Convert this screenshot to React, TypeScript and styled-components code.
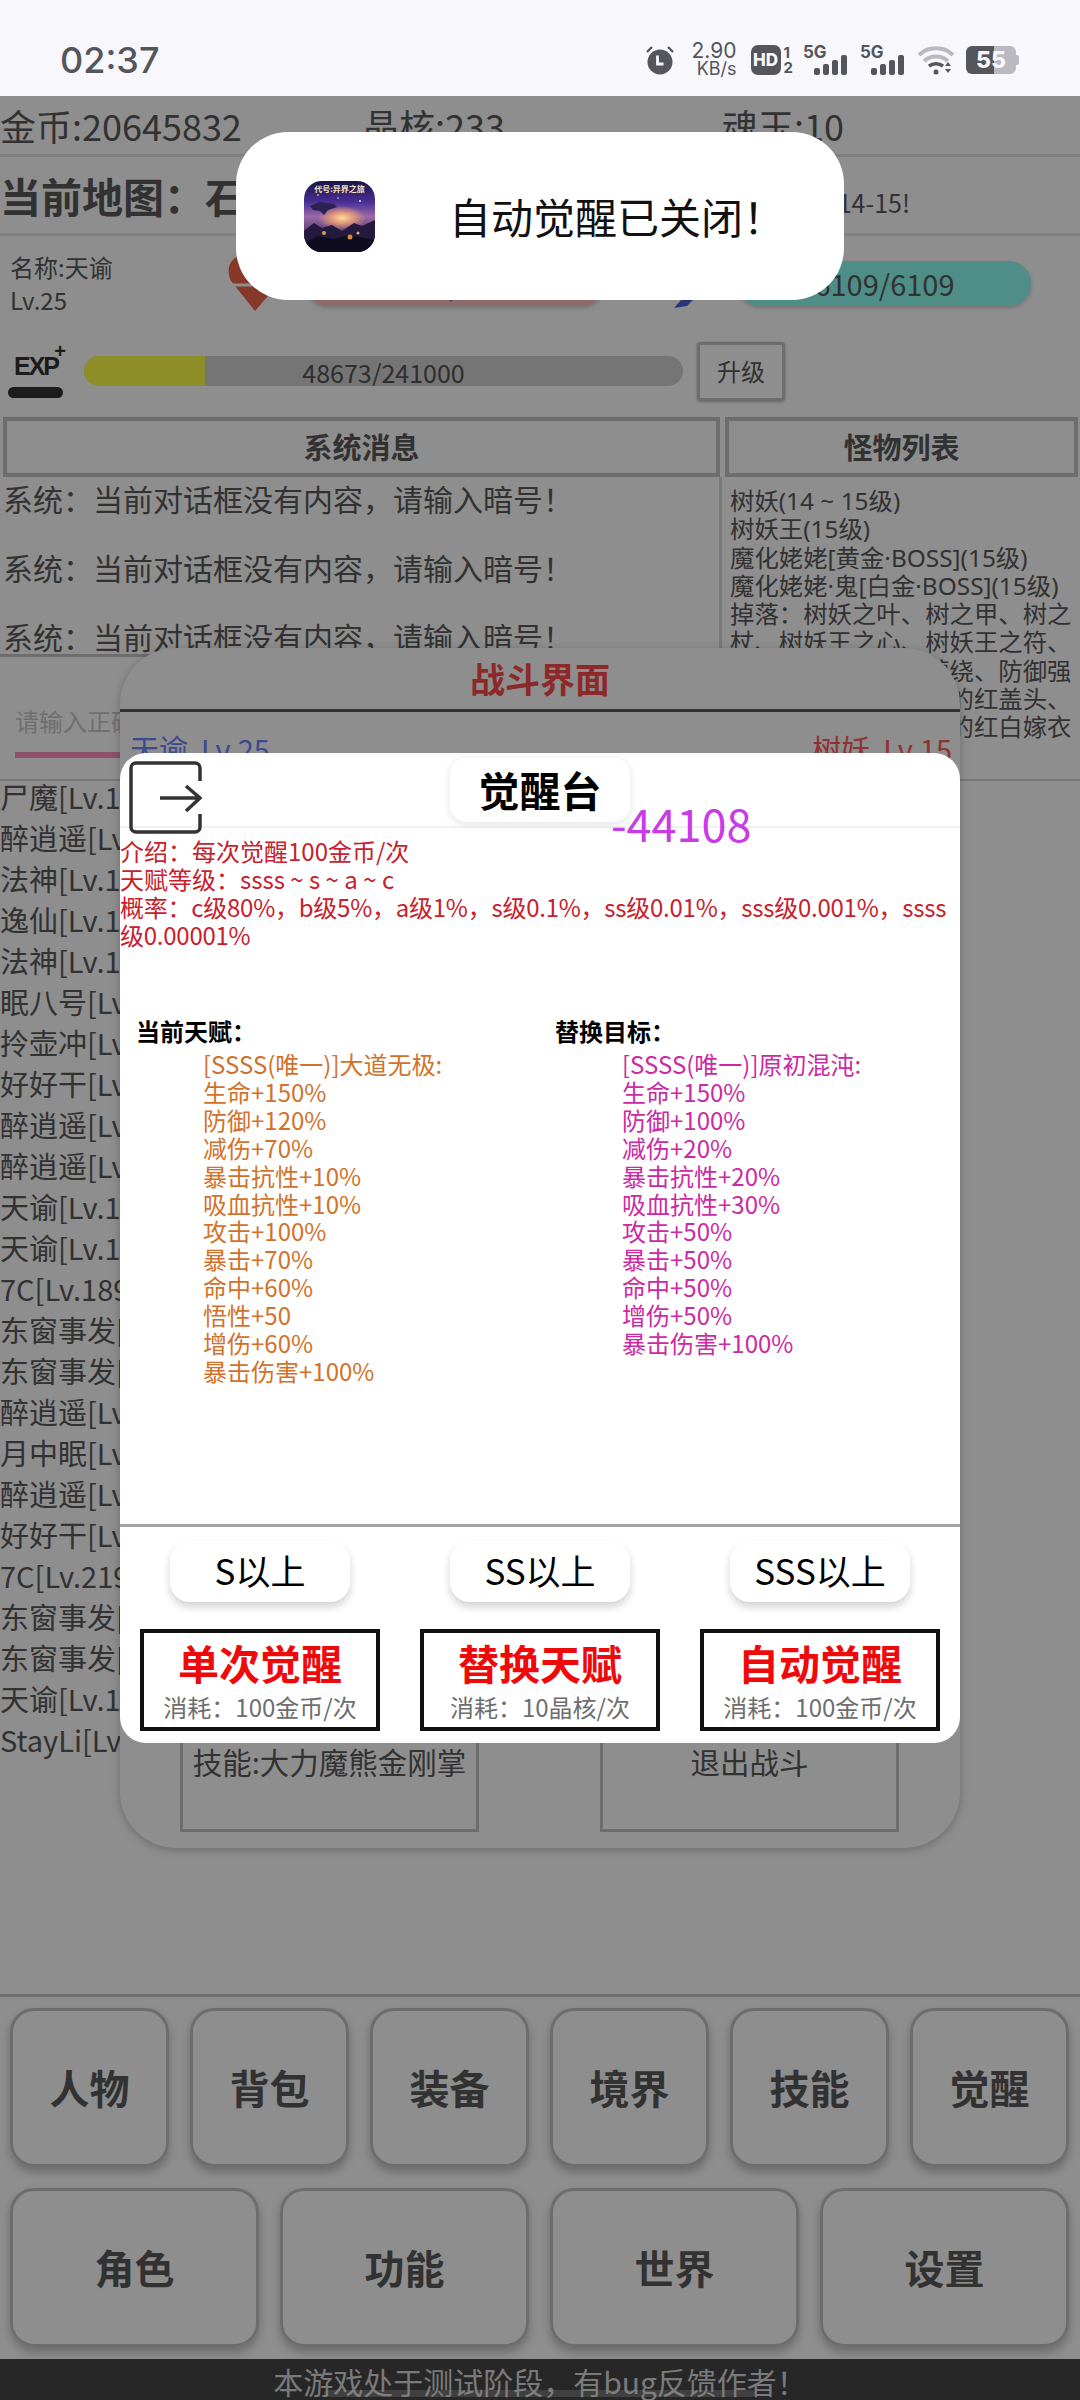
import React from "react"
import styled, { createGlobalStyle } from "styled-components"

// --- data ---
const topMenu = ["人物", "背包", "装备", "境界", "技能", "觉醒"]
const bottomMenu = ["角色", "功能", "世界", "设置"]
const players = [
  "尸魔[Lv.15]", "醉逍遥[Lv.15]", "法神[Lv.15]", "逸仙[Lv.15]", "法神[Lv.15]", "眠八号[Lv.15]",
  "拎壶冲[Lv.15]", "好好干[Lv.15]", "醉逍遥[Lv.15]", "醉逍遥[Lv.15]", "天谕[Lv.15]", "天谕[Lv.15]",
  "7C[Lv.189]", "东窗事发[Lv.15]", "东窗事发[Lv.15]", "醉逍遥[Lv.15]", "月中眠[Lv.15]", "醉逍遥[Lv.15]",
  "好好干[Lv.15]", "7C[Lv.219]", "东窗事发[Lv.15]", "东窗事发[Lv.15]", "天谕[Lv.15]", "StayLi[Lv.15]",
]
const monsters = [
  "树妖(14 ~ 15级)", "树妖王(15级)", "魔化姥姥[黄金·BOSS](15级)", "魔化姥姥·鬼[白金·BOSS](15级)",
  "掉落：树妖之叶、树之甲、树之", "杖、树妖王之心、树妖王之符、", "树妖之根、技能之缠绕、防御强",
  "化、魔化姥姥之魂魄的红盖头、", "魔化姥姥之魂魄所穿的红白嫁衣",
]
const currentTalent = [
  "[SSSS(唯一)]大道无极:", "生命+150%", "防御+120%", "减伤+70%", "暴击抗性+10%", "吸血抗性+10%",
  "攻击+100%", "暴击+70%", "命中+60%", "悟性+50", "增伤+60%", "暴击伤害+100%",
]
const targetTalent = [
  "[SSSS(唯一)]原初混沌:", "生命+150%", "防御+100%", "减伤+20%", "暴击抗性+20%", "吸血抗性+30%",
  "攻击+50%", "暴击+50%", "命中+50%", "增伤+50%", "暴击伤害+100%",
]
const actions = [
  { title: "单次觉醒", cost: "消耗：100金币/次" },
  { title: "替换天赋", cost: "消耗：10晶核/次" },
  { title: "自动觉醒", cost: "消耗：100金币/次" },
]

export default function App() {
  return (
    <Page>
      <GlobalStyle />
      <StatusBar>
        <Clock>02:37</Clock>
        <StatusIcons>
          <svg width="30" height="30" viewBox="0 0 30 30">
            <circle cx="15" cy="17" r="12.5" fill="#55555c" />
            <path d="M12.5 10.5v8.5h6" fill="none" stroke="#f7f7fc" strokeWidth="2.8" />
            <path d="M2 7l5-5M28 7l-5-5" stroke="#55555c" strokeWidth="2.4" />
          </svg>
          <Speed>
            <span>2.90</span>
            <span>KB/s</span>
          </Speed>
          <HdBadge>HD</HdBadge>
          <SimDigits>
            <span>1</span>
            <span>2</span>
          </SimDigits>
          <Signal />
          <Signal />
          <svg width="38" height="30" viewBox="0 0 38 30">
            <path d="M2 10C11 1 27 1 36 10" fill="none" stroke="#b9b9bf" strokeWidth="4" />
            <path d="M7 16c7-6 17-6 24 0" fill="none" stroke="#b9b9bf" strokeWidth="4" />
            <path d="M12 21c4-3 10-3 14 0" fill="none" stroke="#55555c" strokeWidth="3.5" />
            <circle cx="19" cy="27" r="2.5" fill="#55555c" />
            <path d="M31 17l3 4h-6zM31 28l3-4h-6z" fill="#55555c" />
          </svg>
          <Battery>
            <BatteryLabel>55</BatteryLabel>
          </Battery>
        </StatusIcons>
      </StatusBar>

      <Currency>
        <CurrencyItem $width={363}>金币:20645832</CurrencyItem>
        <CurrencyItem $width={359}>晶核:233</CurrencyItem>
        <CurrencyItem>魂玉:10</CurrencyItem>
      </Currency>

      <MapRow>
        <MapName>当前地图：石林</MapName>
        <MapLevel>推荐等级:14-15!</MapLevel>
      </MapRow>

      <PlayerRow>
        <PlayerInfo>
          <span>名称:天谕</span>
          <span>Lv.25</span>
        </PlayerInfo>
        <svg width="56" height="60" viewBox="0 0 56 60">
          <path d="M27 58L3 28C-3 16 3 3 14 3c6 0 11 3 14 8 3-5 8-8 14-8 11 0 17 13 11 25z" fill="#f0654c" />
          <path d="M2 32h52" stroke="#fff" strokeWidth="3" />
        </svg>
        <StatBar $color="#ffbcbc">1860/1860</StatBar>
        <span />
        <svg width="64" height="64" viewBox="0 0 64 64">
          <path d="M0 57L7 49 54 4l8-3-3 8-46 46z" fill="#4a63d8" />
        </svg>
        <StatBar $color="#8efff2">6109/6109</StatBar>
      </PlayerRow>

      <ExpRow>
        <ExpIcon>
          <ExpPlus>+</ExpPlus>
          <ExpLabel>EXP</ExpLabel>
          <ExpPill />
        </ExpIcon>
        <ExpBar>
          <ExpFill style={{ width: `${(48673 / 241000) * 100}%` }} />
          <ExpText>48673/241000</ExpText>
        </ExpBar>
        <LevelUp>升级</LevelUp>
      </ExpRow>

      <Panels>
        <HeaderCell>系统消息</HeaderCell>
        <HeaderCell>怪物列表</HeaderCell>
        <ChatColumn>
          <Messages>
            <Message>系统：当前对话框没有内容，请输入暗号！</Message>
            <Message>系统：当前对话框没有内容，请输入暗号！</Message>
            <Message>系统：当前对话框没有内容，请输入暗号！</Message>
          </Messages>
          <InputArea>
            <CodeInput placeholder="请输入正确的暗号" readOnly />
          </InputArea>
        </ChatColumn>
        <MonsterList>
          {monsters.map(line => (
            <div key={line}>{line}</div>
          ))}
        </MonsterList>
      </Panels>

      <PlayerList>
        {players.map((name, i) => (
          <div key={i}>{name}</div>
        ))}
      </PlayerList>

      <Menu>
        <MenuRow $count={6}>
          {topMenu.map(item => (
            <MenuButton key={item}>{item}</MenuButton>
          ))}
        </MenuRow>
        <MenuRow $count={4}>
          {bottomMenu.map(item => (
            <MenuButton key={item}>{item}</MenuButton>
          ))}
        </MenuRow>
      </Menu>

      <Footer>
        本游戏处于测试阶段，有bug反馈作者！
        <GestureBar />
      </Footer>

      <BattlePanel>
        <BattleTitle>战斗界面</BattleTitle>
        <Fighters>
          <Fighter $color="#6a86ff">天谕&nbsp;&nbsp;Lv.25</Fighter>
          <Fighter $color="#ff5a5a">树妖&nbsp;&nbsp;Lv.15</Fighter>
        </Fighters>
        <BattleActions>
          <BattleBox>技能:大力魔熊金刚掌</BattleBox>
          <BattleBox>退出战斗</BattleBox>
        </BattleActions>
      </BattlePanel>

      <Dim />

      <Modal>
        <ModalHeader>
          <ExitIcon width="73" height="73" viewBox="0 0 73 73">
            <path
              d="M71 20V7a5 5 0 0 0-5-5H7a5 5 0 0 0-5 5v59a5 5 0 0 0 5 5h59a5 5 0 0 0 5-5V53"
              fill="none"
              stroke="#333"
              strokeWidth="3.5"
            />
            <path d="M31 37h40M57 25l14 12-14 13" fill="none" stroke="#333" strokeWidth="3.5" />
          </ExitIcon>
          <ModalTitle>觉醒台</ModalTitle>
        </ModalHeader>
        <Damage>-44108</Damage>
        <ModalBody>
          <Intro>
            介绍：每次觉醒100金币/次
            <br />
            天赋等级：ssss ~ s ~ a ~ c
            <br />
            <Odds>概率：c级80%，b级5%，a级1%，s级0.1%，ss级0.01%，sss级0.001%，ssss级0.00001%</Odds>
          </Intro>
          <Talents>
            <TalentColumn>
              <TalentHead>当前天赋：</TalentHead>
              <TalentList $color="#d2722a">
                {currentTalent.map(line => (
                  <div key={line}>{line}</div>
                ))}
              </TalentList>
            </TalentColumn>
            <TalentColumn>
              <TalentHead>替换目标：</TalentHead>
              <TalentList $color="#cc2aa4">
                {targetTalent.map(line => (
                  <div key={line}>{line}</div>
                ))}
              </TalentList>
            </TalentColumn>
          </Talents>
        </ModalBody>
        <ModalFooter>
          <FilterButton>S以上</FilterButton>
          <FilterButton>SS以上</FilterButton>
          <FilterButton>SSS以上</FilterButton>
          {actions.map(action => (
            <ActionBox key={action.title}>
              <ActionTitle>{action.title}</ActionTitle>
              <ActionCost>{action.cost}</ActionCost>
            </ActionBox>
          ))}
        </ModalFooter>
      </Modal>

      <Toast>
        <AppIcon>
          <svg width="71" height="71" viewBox="0 0 71 71">
            <defs>
              <linearGradient id="sky" x1="0" y1="0" x2="0" y2="1">
                <stop offset="0" stopColor="#1b1546" />
                <stop offset="0.3" stopColor="#4a2f96" />
                <stop offset="0.5" stopColor="#9a6aa8" />
                <stop offset="0.62" stopColor="#7a4f8c" />
                <stop offset="1" stopColor="#120f26" />
              </linearGradient>
              <radialGradient id="glow">
                <stop offset="0" stopColor="#ffe09a" />
                <stop offset="0.5" stopColor="#eea070" stopOpacity="0.8" />
                <stop offset="1" stopColor="#eea070" stopOpacity="0" />
              </radialGradient>
            </defs>
            <rect width="71" height="71" fill="url(#sky)" />
            <ellipse cx="38" cy="37" rx="24" ry="12" fill="url(#glow)" />
            <path d="M6 25l10-4 14 2 3 3-9 3-4 5-4-4-7-1z" fill="#2b2450" />
            <path d="M0 50l10-8 8 5 10-3 10 6 12-8 8 3 13-6v32H0z" fill="#231a3e" />
            <path d="M0 62l14-7 16 3 14-4 27 5v12H0z" fill="#0f0c20" />
            <circle cx="20" cy="52" r="2" fill="#e09a4c" />
            <circle cx="46" cy="56" r="2.5" fill="#d98a3e" />
            <circle cx="54" cy="52" r="1.5" fill="#e9b060" />
            <circle cx="14" cy="14" r="0.8" fill="#fff" />
            <circle cx="56" cy="20" r="0.9" fill="#fff" />
            <circle cx="34" cy="17" r="0.7" fill="#fff" />
            <AppIconTitle x="35.5" y="11" textAnchor="middle">代号:异界之旅</AppIconTitle>
          </svg>
        </AppIcon>
        <ToastText>自动觉醒已关闭！</ToastText>
      </Toast>
    </Page>
  )
}

function Signal() {
  return (
    <SignalWrap>
      <SignalLabel>5G</SignalLabel>
      <svg width="36" height="20" viewBox="0 0 36 20">
        <rect x="1" y="13" width="6" height="7" rx="2" fill="#55555c" />
        <rect x="10" y="9" width="6" height="11" rx="2" fill="#55555c" />
        <rect x="19" y="5" width="6" height="15" rx="2" fill="#55555c" />
        <rect x="28" y="0" width="6" height="20" rx="2" fill="#55555c" />
      </svg>
    </SignalWrap>
  )
}

// --- styled components ---
const font = `"Noto Sans CJK SC", "Noto Sans", sans-serif`

const GlobalStyle = createGlobalStyle`
  html, body {
    margin: 0;
    padding: 0;
    background: #fff;
  }
  * {
    box-sizing: border-box;
  }
`

const Page = styled.div`
  position: relative;
  width: 1080px;
  height: 2400px;
  overflow: hidden;
  display: flex;
  flex-direction: column;
  background: #fff;
  color: #5a5a5a;
  font-family: ${font};
`

const StatusBar = styled.div`
  position: relative;
  z-index: 5;
  flex: none;
  height: 96px;
  display: flex;
  align-items: center;
  justify-content: space-between;
  padding: 24px 61px 0 60px;
  background: #f7f7fc;
  color: #55555c;
`

const Clock = styled.div`
  font-size: 36px;
  font-weight: 500;
  font-family: "Inter", sans-serif;
`

const StatusIcons = styled.div`
  display: flex;
  align-items: center;
  gap: 6px;
`

const Speed = styled.div`
  display: flex;
  flex-direction: column;
  align-items: flex-end;
  width: 50px;
  margin: 0 8px 0 6px;
  font-size: 21px;
  line-height: 18px;
  font-family: "Inter", sans-serif;

  span:last-child {
    font-size: 18px;
  }
`

const HdBadge = styled.div`
  width: 30px;
  height: 30px;
  border-radius: 7px;
  background: #55555c;
  color: #f7f7fc;
  font: 800 17px/30px "Inter", sans-serif;
  text-align: center;
`

const SimDigits = styled.div`
  display: flex;
  flex-direction: column;
  margin: 0 4px 0 -3px;
  font: 700 15px/15px "Inter", sans-serif;
`

const SignalWrap = styled.div`
  position: relative;
  width: 46px;
  height: 30px;
  margin-right: 5px;
  display: flex;
  align-items: flex-end;
  justify-content: flex-end;
`

const SignalLabel = styled.span`
  position: absolute;
  left: 0;
  top: -2px;
  font: 700 17px/18px "Inter", sans-serif;
`

const Battery = styled.div`
  position: relative;
  width: 50px;
  height: 28px;
  margin: 0 3px 0 5px;
  border-radius: 6px;
  background: linear-gradient(90deg, #55555c 55%, #b9b9bf 55%);

  &::after {
    content: "";
    position: absolute;
    right: -3px;
    top: 9px;
    width: 3px;
    height: 10px;
    border-radius: 0 2px 2px 0;
    background: #b9b9bf;
  }
`

const BatteryLabel = styled.span`
  position: absolute;
  inset: 0;
  text-align: center;
  color: #f7f7fc;
  font: 800 23px/28px "Inter", sans-serif;
`

const Currency = styled.div`
  flex: none;
  height: 61px;
  display: flex;
  align-items: center;
  border-bottom: 3px solid #e6e6e6;
  font-size: 36px;
  line-height: 1;
`

const CurrencyItem = styled.div<{ $width?: number }>`
  flex: none;
  width: ${p => (p.$width ? `${p.$width}px` : "auto")};
  white-space: nowrap;
`

const MapRow = styled.div`
  flex: none;
  height: 79px;
  display: flex;
  align-items: center;
  justify-content: space-between;
  padding-right: 170px;
  border-bottom: 3px solid #e6e6e6;
`

const MapName = styled.div`
  font-size: 41px;
  font-weight: 700;
`

const MapLevel = styled.div`
  margin-top: 14px;
  font-size: 25px;
`

const PlayerRow = styled.div`
  flex: none;
  height: 94px;
  display: grid;
  grid-template-columns: 228px 78px 298px 70px 64px 293px;
  align-items: center;
`

const PlayerInfo = styled.div`
  display: flex;
  flex-direction: column;
  padding-left: 10px;
  font-size: 24px;
  line-height: 33px;
`

const StatBar = styled.div<{ $color: string }>`
  height: 45px;
  border-radius: 22px;
  background: ${p => p.$color};
  box-shadow: 0 2px 4px rgba(0, 0, 0, 0.2);
  font-size: 29px;
  line-height: 45px;
  text-align: center;
`

const ExpRow = styled.div`
  flex: none;
  height: 82px;
  display: flex;
  align-items: center;
  padding-left: 8px;
`

const ExpIcon = styled.div`
  position: relative;
  width: 60px;
  height: 46px;
  margin-right: 16px;
  margin-top: 8px;
  color: #333;
`

const ExpLabel = styled.div`
  position: absolute;
  left: 6px;
  top: -1px;
  font: 700 25px/30px "Liberation Sans", sans-serif;
  letter-spacing: -2px;
`

const ExpPlus = styled.div`
  position: absolute;
  right: 2px;
  top: -11px;
  font: 700 20px/20px "Liberation Sans", sans-serif;
`

const ExpPill = styled.div`
  position: absolute;
  left: 0;
  bottom: 0;
  width: 55px;
  height: 11px;
  border-radius: 6px;
  background: #333;
`

const ExpBar = styled.div`
  position: relative;
  width: 599px;
  height: 30px;
  border-radius: 15px;
  background: #d4d2d2;
  overflow: hidden;
`

const ExpFill = styled.div`
  height: 100%;
  background: #ffff4b;
`

const ExpText = styled.div`
  position: absolute;
  inset: 0;
  text-align: center;
  font-size: 25px;
  line-height: 32px;
  color: #555;
`

const LevelUp = styled.div`
  width: 88px;
  height: 59px;
  margin-left: 14px;
  border: 3px solid #c4c4c4;
  border-radius: 3px;
  box-shadow: 0 1px 3px rgba(0, 0, 0, 0.3);
  font-size: 24px;
  line-height: 52px;
  text-align: center;
`

const Panels = styled.div`
  flex: none;
  height: 369px;
  display: grid;
  grid-template-columns: 722px 358px;
  grid-template-rows: 60px 1fr;
  padding-top: 5px;
  border-bottom: 2px solid #d8d8d8;
`

const HeaderCell = styled.div`
  margin: 0 2px 0 3px;
  border: 4px solid #c4c4c4;
  font-size: 29px;
  font-weight: 700;
  line-height: 50px;
  text-align: center;
`

const ChatColumn = styled.div`
  border-right: 3px solid #d8d8d8;
  display: flex;
  flex-direction: column;
`

const Messages = styled.div`
  height: 180px;
  padding: 1px 0 0 3px;
  overflow: hidden;
  border-bottom: 3px solid #c4c4c4;
`

const Message = styled.div`
  font-size: 30px;
  line-height: 41px;
  margin-bottom: 28px;
  white-space: nowrap;
`

const InputArea = styled.div`
  flex: 1;
  padding: 32px 0 0 15px;
`

const CodeInput = styled.input`
  width: 680px;
  height: 69px;
  padding: 0;
  border: 0;
  border-bottom: 6px solid #ff8fc0;
  outline: 0;
  background: transparent;
  font-family: ${font};
  font-size: 24px;

  &::placeholder {
    color: #c7c7c7;
  }
`

const MonsterList = styled.div`
  padding: 10px 0 0 8px;
  font-family: "Noto Sans", "Noto Sans CJK SC", sans-serif;
  font-size: 24.4px;
  line-height: 28.3px;
  white-space: nowrap;
`

const PlayerList = styled.div`
  flex: 1;
  min-height: 0;
  overflow: hidden;
  margin-top: -5px;
  font-size: 29px;
  line-height: 41px;
  white-space: nowrap;
`

const Menu = styled.div`
  flex: none;
  height: 365px;
  display: flex;
  flex-direction: column;
  gap: 21px;
  padding: 11px 11px 0 10px;
  border-top: 3px solid #c4c4c4;
`

const MenuRow = styled.div<{ $count: number }>`
  display: grid;
  grid-template-columns: repeat(${p => p.$count}, 1fr);
  gap: 21px;
`

const MenuButton = styled.div`
  height: 159px;
  border: 3px solid #c4c4c4;
  border-radius: 24px;
  box-shadow: 0 5px 10px rgba(0, 0, 0, 0.25);
  font-size: 40px;
  font-weight: 700;
  line-height: 153px;
  text-align: center;
`

const Footer = styled.div`
  position: relative;
  flex: none;
  height: 41px;
  background: #464646;
  color: #dcdcdc;
  font-size: 30px;
  line-height: 44px;
  text-align: center;
  white-space: nowrap;
`

const GestureBar = styled.div`
  position: absolute;
  left: 324px;
  bottom: 3px;
  width: 431px;
  height: 7px;
  border-radius: 4px;
  background: rgba(255, 255, 255, 0.25);
`

const BattlePanel = styled.div`
  position: absolute;
  left: 120px;
  top: 648px;
  width: 840px;
  height: 1200px;
  display: flex;
  flex-direction: column;
  border-radius: 56px;
  background: #fff;
  box-shadow: 0 2px 10px rgba(0, 0, 0, 0.25);
`

const BattleTitle = styled.div`
  height: 64px;
  border-bottom: 3px solid #5c5c5c;
  color: #ff4b4b;
  font-size: 35px;
  font-weight: 700;
  line-height: 60px;
  text-align: center;
`

const Fighters = styled.div`
  display: flex;
  justify-content: space-between;
  padding: 16px 8px 0 10px;
`

const Fighter = styled.div<{ $color: string }>`
  color: ${p => p.$color};
  font-size: 29px;
  line-height: 40px;
`

const BattleActions = styled.div`
  margin-top: auto;
  display: flex;
  justify-content: space-between;
  padding: 0 61px 16px 60px;
`

const BattleBox = styled.div`
  width: 299px;
  height: 92px;
  border: 3px solid #c4c4c4;
  font-size: 29.5px;
  line-height: 36px;
  text-align: center;
`

const Dim = styled.div`
  position: absolute;
  inset: 96px 0 0;
  background: rgba(0, 0, 0, 0.443);
`

const Modal = styled.div`
  position: absolute;
  left: 120px;
  top: 753px;
  width: 840px;
  height: 990px;
  display: flex;
  flex-direction: column;
  border-radius: 26px;
  background: #fff;
  color: #000;
`

const ModalHeader = styled.div`
  position: relative;
  flex: none;
  height: 75px;
  display: flex;
  justify-content: center;
  padding-top: 5px;
  border-bottom: 2px solid #f2f2f2;
`

const ExitIcon = styled.svg`
  position: absolute;
  left: 9px;
  top: 8px;
`

const ModalTitle = styled.div`
  width: 180px;
  height: 64px;
  border-radius: 16px;
  background: #fff;
  box-shadow: 0 2px 8px rgba(0, 0, 0, 0.12);
  font-size: 41px;
  font-weight: 700;
  line-height: 62px;
  text-align: center;
`

const Damage = styled.div`
  position: absolute;
  left: 491px;
  top: 43px;
  color: #c93be6;
  font-size: 45px;
  line-height: 54px;
`

const ModalBody = styled.div`
  flex: 1;
  padding-top: 9px;
  border-bottom: 3px solid #a3a3a3;
`

const Intro = styled.div`
  min-height: 113px;
  color: #c8202c;
  font-size: 24px;
  line-height: 28px;
`

const Odds = styled.span`
  letter-spacing: -0.25px;
`

const Talents = styled.div`
  display: grid;
  margin-top: 67px;
  padding-left: 16px;
  grid-template-columns: 419px 405px;
`

const TalentColumn = styled.div``

const TalentHead = styled.div`
  font-size: 24px;
  font-weight: 700;
  line-height: 28px;
`

const TalentList = styled.div<{ $color: string }>`
  margin-top: 5px;
  padding-left: 67px;
  color: ${p => p.$color};
  font-size: 24px;
  line-height: 27.9px;
`

const ModalFooter = styled.div`
  flex: none;
  height: 216px;
  display: grid;
  grid-template-columns: repeat(3, 280px);
  grid-template-rows: 61px 102px;
  row-gap: 27px;
  justify-items: center;
  padding-top: 14px;
`

const FilterButton = styled.div`
  width: 180px;
  height: 61px;
  border-radius: 20px;
  background: #fff;
  box-shadow: 0 5px 8px rgba(0, 0, 0, 0.18);
  font-size: 35px;
  line-height: 58px;
  text-align: center;
`

const ActionBox = styled.div`
  width: 240px;
  height: 102px;
  border: 4px solid #111;
  text-align: center;
`

const ActionTitle = styled.div`
  color: #ee0a0a;
  font-size: 41px;
  font-weight: 700;
  line-height: 59px;
`

const ActionCost = styled.div`
  color: #6e6e6e;
  font-size: 24px;
  line-height: 30px;
`

const Toast = styled.div`
  position: absolute;
  left: 236px;
  top: 132px;
  width: 608px;
  height: 168px;
  display: flex;
  align-items: center;
  gap: 74px;
  padding-left: 68px;
  border-radius: 52px;
  background: #fff;
  color: #111;
`

const AppIcon = styled.div`
  flex: none;
  width: 71px;
  height: 71px;
  border-radius: 18px;
  overflow: hidden;

  svg {
    display: block;
  }
`

const AppIconTitle = styled.text`
  fill: #f2e2c0;
  font-family: ${font};
  font-size: 8px;
  font-weight: 700;
`

const ToastText = styled.div`
  font-size: 42px;
  line-height: 1;
  white-space: nowrap;
`
